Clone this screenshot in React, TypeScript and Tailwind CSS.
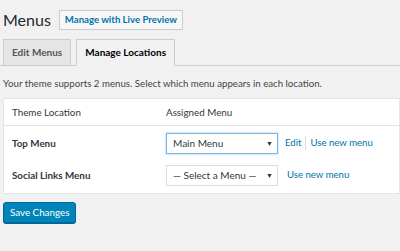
import React from 'react'

const font = { fontFamily: 'Lato, "Open Sans", sans-serif' }

function Select({ label, focused }: { label: string; focused?: boolean }) {
  return (
    <div
      className={
        'flex h-[21px] w-[112px] items-center justify-between whitespace-nowrap bg-white pl-[6px] pr-[4px] text-[10px] text-[#32373c] ' +
        (focused ? 'border border-[#7eb4e2] shadow-[0_0_2px_rgba(30,140,190,0.5)]' : 'border border-[#ddd]')
      }
    >
      <span>{label}</span>
      <span className="text-[7px] text-[#333]">▼</span>
    </div>
  )
}

export default function App() {
  return (
    <div className="h-[251px] w-[400px] overflow-hidden bg-[#f1f1f1] text-[#23282d]" style={font}>
      {/* title */}
      <div className="flex items-center gap-[8px] pl-[3px] pt-[10px]">
        <h1 className="text-[16px] leading-[20px] font-normal text-[#23282d]">Menus</h1>
        <button className="h-[20px] border border-[#ccc] bg-[#f7f7f7] px-[5px] text-[9.6px] font-bold text-[#0073aa]">
          Manage with Live Preview
        </button>
      </div>

      {/* tabs */}
      <div className="mt-[9px] flex gap-[5px] border-b border-[#ccc] pl-[3px]">
        <div className="-mb-px flex h-[27px] items-center border border-[#ccc] bg-[#e5e5e5] px-[8px] text-[10px] font-bold text-[#555]">
          Edit Menus
        </div>
        <div className="-mb-px flex h-[27px] items-center border border-[#ccc] border-b-[#f1f1f1] bg-[#f1f1f1] px-[8px] text-[10px] font-bold text-[#000]">
          Manage Locations
        </div>
      </div>

      <p className="pl-[3px] pt-[10px] text-[9.7px] leading-[14px] text-[#444]">
        Your theme supports 2 menus. Select which menu appears in each location.
      </p>

      {/* table */}
      <div className="ml-[3px] mt-[8px] border border-[#e5e5e5] bg-white text-[9.8px]">
        <div className="flex h-[27px] items-center border-b border-[#e1e1e1] text-[#32373c]">
          <div className="w-[162px] pl-[8px]">Theme Location</div>
          <div>Assigned Menu</div>
        </div>
        <div className="flex h-[34px] items-center pt-[1px]">
          <div className="w-[162px] pl-[8px] font-bold text-[#32373c]">Top Menu</div>
          <Select label="Main Menu" focused />
          <div className="ml-[7px] flex items-center text-[9.6px] text-[#0073aa]">
            <span>Edit</span>
            <span className="mx-[4px] h-[14px] w-px bg-[#ddd]" />
            <span>Use new menu</span>
          </div>
        </div>
        <div className="flex h-[33px] items-center pb-[2px]">
          <div className="w-[162px] pl-[8px] font-bold text-[#32373c]">Social Links Menu</div>
          <Select label="— Select a Menu —" />
          <div className="ml-[9px] text-[9.6px] text-[#0073aa]">Use new menu</div>
        </div>
      </div>

      <button className="ml-[3px] mt-[8px] h-[21px] rounded-[3px] border border-[#006799] bg-[#0085ba] px-[6px] text-[9.8px] text-white shadow-[0_1px_0_#006799]">
        Save Changes
      </button>
    </div>
  )
}
